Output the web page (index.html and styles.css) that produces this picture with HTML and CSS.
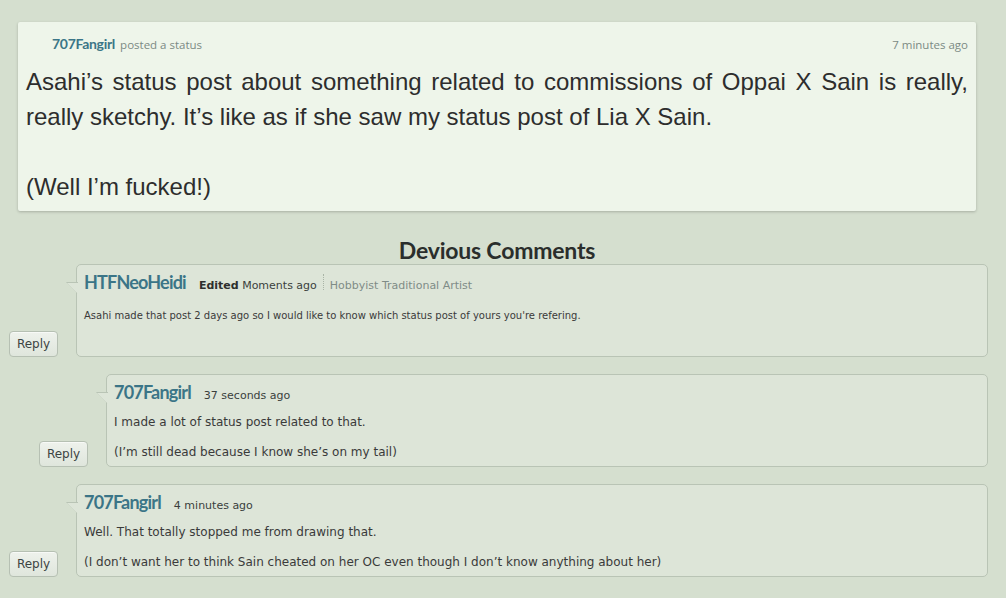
FILE: index.html
```html
<!DOCTYPE html>
<html>
<head>
<meta charset="utf-8">
<link rel="stylesheet" href="styles.css">
</head>
<body>
<div class="page">
  <div class="status-card">
    <div class="status-head">
      <div class="who"><a class="uname">707Fangirl</a> <span class="muted">posted a status</span></div>
      <div class="muted when">7 minutes ago</div>
    </div>
    <div class="status-text">
      <p>Asahi’s status post about something related to commissions of Oppai X Sain is really, really sketchy. It’s like as if she saw my status post of Lia X Sain.</p>
      <p>(Well I’m fucked!)</p>
    </div>
  </div>

  <h2 class="comments-title">Devious Comments</h2>

  <div class="comment">
    <div class="reply-col"><button class="reply">Reply</button></div>
    <div class="cbox">
      <span class="tail"></span>
      <div class="chead">
        <a class="cname">HTFNeoHeidi</a>
        <span class="cmeta"><b>Edited</b> Moments ago</span>
        <span class="sep"></span>
        <span class="role">Hobbyist Traditional Artist</span>
      </div>
      <div class="cbody small"><p>Asahi made that post 2 days ago so I would like to know which status post of yours you're refering.</p></div>
    </div>
  </div>

  <div class="comment nested">
    <div class="reply-col"><button class="reply">Reply</button></div>
    <div class="cbox">
      <span class="tail"></span>
      <div class="chead">
        <a class="cname">707Fangirl</a>
        <span class="cmeta">37 seconds ago</span>
      </div>
      <div class="cbody"><p>I made a lot of status post related to that.</p><p>(I’m still dead because I know she’s on my tail)</p></div>
    </div>
  </div>

  <div class="comment">
    <div class="reply-col"><button class="reply">Reply</button></div>
    <div class="cbox">
      <span class="tail"></span>
      <div class="chead">
        <a class="cname">707Fangirl</a>
        <span class="cmeta">4 minutes ago</span>
      </div>
      <div class="cbody"><p>Well. That totally stopped me from drawing that.</p><p>(I don’t want her to think Sain cheated on her OC even though I don’t know anything about her)</p></div>
    </div>
  </div>
</div>
</body>
</html>
```

FILE: styles.css
```css
* { box-sizing: border-box; }
html, body { margin: 0; padding: 0; }
body {
  background: #d5dfcf;
  font-family: "DejaVu Sans", Verdana, sans-serif;
  color: #333;
  width: 1006px;
  height: 598px;
  overflow: hidden;
}
.page { padding: 22px 18px 0 9px; }

.status-card {
  margin: 0 12px 0 9px;
  background: #eef5ea;
  border-radius: 2px;
  box-shadow: 0 1px 3px rgba(0,0,0,0.22);
  padding: 12px 8px 10px 8px;
  height: 189px;
}
.status-head {
  display: flex;
  justify-content: space-between;
  align-items: baseline;
  padding-left: 26px;
}
.uname {
  font-family: Lato, "Open Sans", sans-serif;
  font-weight: 700;
  font-size: 14px;
  color: #3b7587;
  letter-spacing: -0.3px;
}
.muted {
  color: #7b8a84;
  font-family: "Open Sans", "DejaVu Sans", sans-serif;
  font-size: 11.5px;
}
.status-text {
  font-family: "Liberation Sans", Arial, sans-serif;
  font-size: 24px;
  line-height: 35px;
  color: #2d2d2d;
  margin-top: 11px;
  text-align: justify;
}
.status-text p { margin: 0 0 35px 0; }
.status-text p:last-child { margin: 0; }

.comments-title {
  margin: 25px 0 0 0;
  padding-left: 9px;
  padding-right: 12px;
  text-align: center;
  font-family: Lato, "Open Sans", sans-serif;
  font-weight: 700;
  font-size: 23px;
  line-height: 28px;
  color: #2a2e2c;
  letter-spacing: -0.2px;
}

.comment {
  display: flex;
  align-items: flex-end;
  margin-bottom: 17px;
}
.comment.nested { padding-left: 30px; }
.reply-col { width: 67px; flex: none; }
.reply {
  display: block;
  width: 49px;
  height: 26px;
  font-family: "DejaVu Sans", Verdana, sans-serif;
  font-size: 12px;
  color: #3c4442;
  background: linear-gradient(#eef2ec, #dfe6dc);
  border: 1px solid #b6c0b3;
  border-radius: 4px;
  padding: 0;
  box-shadow: 0 1px 0 rgba(255,255,255,0.6) inset;
}
.cbox {
  position: relative;
  flex: 1;
  height: 93px;
  background: #dde5d8;
  border: 1px solid #b9c4b5;
  border-radius: 5px;
  padding: 6px 8px 8px 7px;
}
.tail {
  position: absolute;
  left: -11px;
  top: 17px;
  width: 12px;
  height: 12px;
  background: #dde5d8;
  clip-path: polygon(0 0, 100% 0, 100% 100%);
}
.tail::before {
  content: "";
  position: absolute;
  left: 0; top: 0;
  width: 12px; height: 1px;
  background: #b9c4b5;
}
.tail::after {
  content: "";
  position: absolute;
  left: 0; top: 0;
  width: 16px; height: 1px;
  background: #b9c4b5;
  transform-origin: 0 0;
  transform: rotate(45deg);
}
.chead {
  display: flex;
  align-items: baseline;
  white-space: nowrap;
}
.cname {
  font-family: Lato, "Open Sans", sans-serif;
  font-weight: 700;
  font-size: 18px;
  color: #3b7587;
  letter-spacing: -0.8px;
  margin-right: 13px;
}
.cmeta {
  font-size: 11px;
  color: #3a3f3d;
}
.cmeta b { font-weight: 700; color: #2d2f2e; }
.sep {
  display: inline-block;
  width: 0;
  height: 16px;
  border-left: 1px dotted #a9b4a6;
  margin: 0 6px;
  align-self: center;
}
.role { font-size: 11px; color: #7f8c87; }
.cbody {
  font-size: 12px;
  color: #3a3a3a;
  margin-top: 11px;
}
.cbody p { margin: 0 0 13px 0; line-height: 17px; }
.cbody.small { font-size: 10px; margin-top: 14px; }
```
